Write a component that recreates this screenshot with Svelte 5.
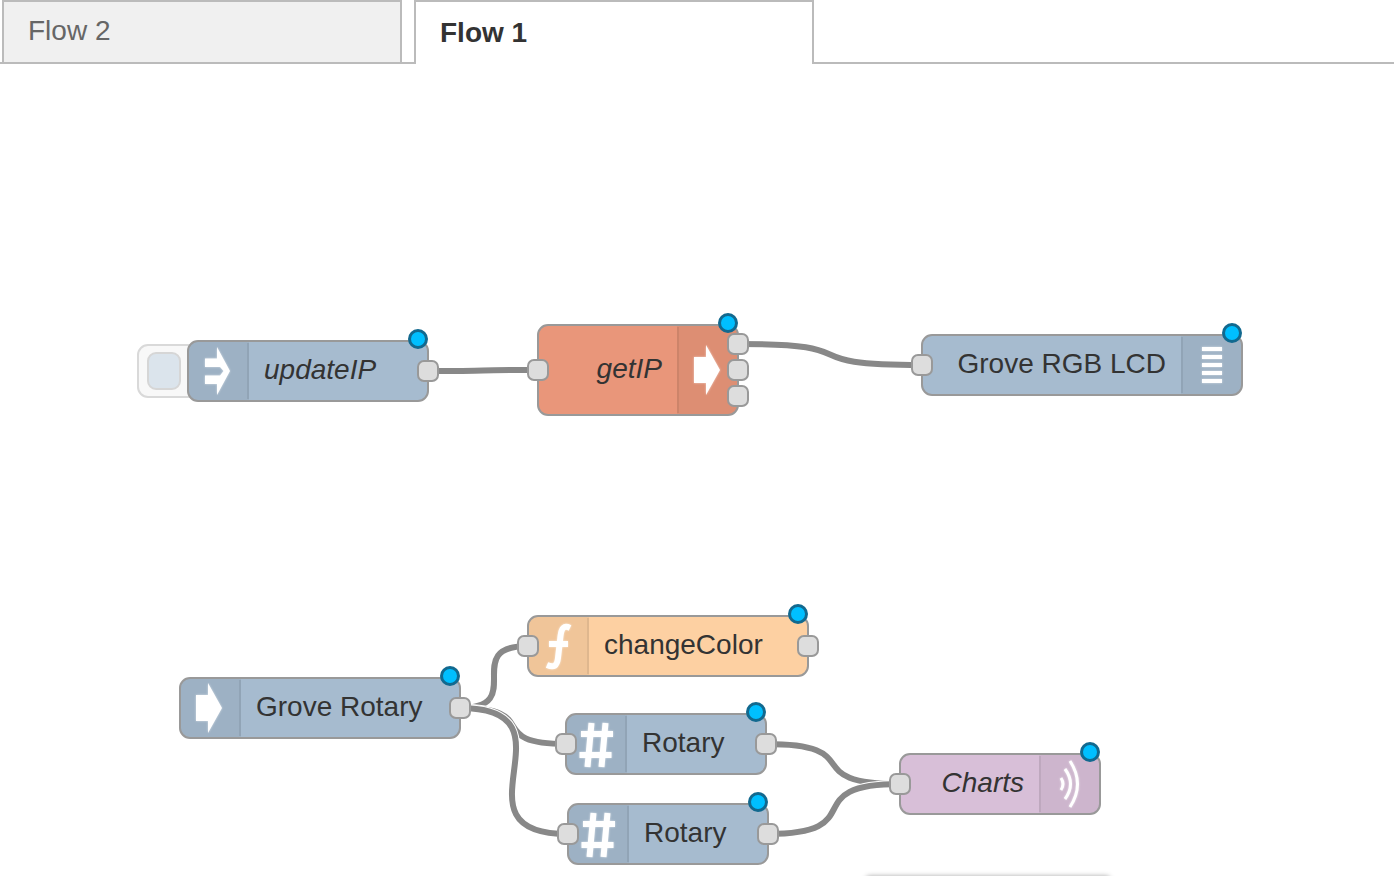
<script>
  const tabs = [
    { label: 'Flow 2', active: false },
    { label: 'Flow 1', active: true }
  ];

  // Node boxes, in canvas coordinates.
  const nodes = [
    { id: 'update', label: 'updateIP', x: 187, y: 276, w: 242, h: 62, color: 'blue', icon: 'inject', italic: true, outs: 1, trigger: true },
    { id: 'getip', label: 'getIP', x: 537, y: 260, w: 202, h: 92, color: 'salmon', icon: 'arrow', italic: true, right: true, input: true, outs: 3 },
    { id: 'lcd', label: 'Grove RGB LCD', x: 921, y: 270, w: 322, h: 62, color: 'blue', icon: 'lines', right: true, input: true, outs: 0 },
    { id: 'grove', label: 'Grove Rotary', x: 179, y: 613, w: 282, h: 62, color: 'blue', icon: 'arrow', outs: 1 },
    { id: 'change', label: 'changeColor', x: 527, y: 551, w: 282, h: 62, color: 'orange', icon: 'func', input: true, outs: 1 },
    { id: 'rotary1', label: 'Rotary', x: 565, y: 649, w: 202, h: 62, color: 'blue', icon: 'hash', input: true, outs: 1 },
    { id: 'rotary2', label: 'Rotary', x: 567, y: 739, w: 202, h: 62, color: 'blue', icon: 'hash', input: true, outs: 1 },
    { id: 'charts', label: 'Charts', x: 899, y: 689, w: 202, h: 62, color: 'plum', icon: 'waves', italic: true, right: true, input: true, outs: 0 }
  ];

  const links = [
    ['update', 0, 'getip'],
    ['getip', 0, 'lcd'],
    ['grove', 0, 'change'],
    ['grove', 0, 'rotary1'],
    ['grove', 0, 'rotary2'],
    ['rotary1', 0, 'charts'],
    ['rotary2', 0, 'charts']
  ];

  const PORT_STEP = 26;
  const REACH = 200;
  const byId = Object.fromEntries(nodes.map((n) => [n.id, n]));

  function wire([from, port, to]) {
    const a = byId[from];
    const b = byId[to];
    const x1 = a.x + a.w - 1;
    const y1 = a.y + a.h / 2 + (port - (a.outs - 1) / 2) * PORT_STEP;
    const x2 = b.x + 1;
    const y2 = b.y + b.h / 2;
    const pull = 0.75 * Math.min(REACH, Math.hypot(x2 - x1, y2 - y1));
    return `M${x1} ${y1}C${x1 + pull} ${y1} ${x2 - pull} ${y2} ${x2} ${y2}`;
  }
</script>

<nav class="tabs" aria-label="Flows">
  {#each tabs as tab}
    <a class="tab" class:active={tab.active} href="#flow" aria-current={tab.active ? 'page' : undefined}>{tab.label}</a>
  {/each}
</nav>

<main class="canvas">
  <svg class="wires" aria-hidden="true">
    {#each links as link}
      <path class="outline" d={wire(link)} />
      <path class="line" d={wire(link)} />
    {/each}
  </svg>

  {#each nodes as node (node.id)}
    <div class="slot" style="left:{node.x}px;top:{node.y}px;width:{node.w}px;height:{node.h}px">
      {#if node.trigger}
        <button class="trigger" aria-label="Inject {node.label}"><span></span></button>
      {/if}
      <div class="node {node.color}" class:right={node.right}>
        <div class="pane">
          <svg width="58" height="58" viewBox="0 0 58 58" aria-hidden="true">
            {#if node.icon === 'inject'}
              <path class="solid" d="M16 16.500H28V5L41 29L28 53V42H16V33.500H31L34.500 29L31 25H16Z" />
            {:else if node.icon === 'arrow'}
              <path class="solid" d="M15 16H27V4L41 29L27 54V42H15Z" />
            {:else if node.icon === 'lines'}
              <path class="stroke four" d="M19 13H39M19 21H39M19 29H39M19 37H39M19 45H39" />
            {:else if node.icon === 'func'}
              <path class="stroke six" d="M41 11C35 8 32.500 11 31.500 19L29 41C28 49 25 51 18 48M20 27H39" />
            {:else if node.icon === 'hash'}
              <path class="stroke six" d="M24.500 8L20.500 52M38.500 8L34.500 52M14 19H46M12.500 40H44.500" />
            {:else}
              <path class="stroke three" d="M20 23Q24 29 20 35M24 14Q35 29 24 44M29 6Q44 29 29 52" />
            {/if}
          </svg>
        </div>
        <span class="label" class:italic={node.italic}>{node.label}</span>
      </div>
      {#if node.input}
        <div class="ports in"><i></i></div>
      {/if}
      <div class="ports out">
        {#each { length: node.outs } as _}<i></i>{/each}
      </div>
      <span class="changed"></span>
    </div>
  {/each}

  <div class="drawer"></div>
</main>

<style>
  :global(body) {
    margin: 0;
    background: #fff;
  }

  :global(#app) {
    display: flex;
    flex-direction: column;
    min-height: 100vh;
    font-family: 'Liberation Sans', Arial, sans-serif;
    font-size: 28px;
    color: #333;
  }

  .tabs {
    display: flex;
    gap: 12px;
    height: 64px;
    padding-left: 2px;
    box-sizing: border-box;
    box-shadow: inset 0 -2px #bbb;
  }

  .tab {
    box-sizing: border-box;
    flex: 0 1 400px;
    height: 62px;
    padding: 0 24px;
    border: 2px solid #bbb;
    border-bottom: 0;
    background: #f0f0f0;
    color: #666;
    line-height: 58px;
    text-decoration: none;
    white-space: nowrap;
  }

  .tab.active {
    height: 64px;
    background: #fff;
    color: #333;
    font-weight: bold;
    line-height: 62px;
  }

  .canvas {
    position: relative;
    flex: 1;
    min-height: 812px;
    overflow: hidden;
  }

  .wires {
    position: absolute;
    inset: 0;
    width: 100%;
    height: 100%;
    fill: none;
  }

  .outline {
    stroke: #fff;
    stroke-width: 8px;
  }

  .line {
    stroke: #888;
    stroke-width: 6px;
  }

  .slot {
    position: absolute;
  }

  .node {
    position: relative;
    display: flex;
    box-sizing: border-box;
    height: 100%;
    border: 2px solid #999;
    border-radius: 11px;
    overflow: hidden;
  }

  .node.right {
    flex-direction: row-reverse;
  }

  .blue { background: #a6bbcf; }
  .salmon { background: #e9967a; }
  .orange { background: #fdd0a2; }
  .plum { background: #d8bfd8; }

  .pane {
    position: relative;
    display: flex;
    align-items: center;
    box-sizing: border-box;
    width: 60px;
    padding-right: 2px;
    background: rgba(0, 0, 0, 0.05);
  }

  .right .pane {
    padding: 0 0 0 2px;
  }

  .pane::after {
    content: '';
    position: absolute;
    top: 1px;
    bottom: 1px;
    right: 0;
    width: 2px;
    background: rgba(0, 0, 0, 0.07);
  }

  .right .pane::after {
    right: auto;
    left: 0;
  }

  .solid {
    fill: #fff;
    filter: drop-shadow(0 0 1px rgba(255, 255, 255, 0.6));
  }

  .stroke {
    fill: none;
    stroke: #fff;
    filter: drop-shadow(0 0 1px rgba(255, 255, 255, 0.6));
  }

  .three { stroke-width: 3px; }
  .four { stroke-width: 4px; }
  .six { stroke-width: 6px; }

  .label {
    align-self: center;
    padding: 0 15px 2px;
    line-height: 32px;
    white-space: nowrap;
  }

  .italic {
    font-style: italic;
  }

  .ports {
    position: absolute;
    top: 0;
    bottom: 0;
    display: flex;
    flex-direction: column;
    justify-content: center;
    gap: 4px;
  }

  .in { left: -10px; }
  .out { right: -10px; }

  .ports i {
    box-sizing: border-box;
    width: 22px;
    height: 22px;
    border: 2px solid #999;
    border-radius: 7px;
    background: #ddd;
  }

  .changed {
    position: absolute;
    top: -11px;
    right: 1px;
    box-sizing: border-box;
    width: 20px;
    height: 20px;
    border: 3px solid #12698f;
    border-radius: 50%;
    background: #00bfff;
  }

  .trigger {
    position: absolute;
    top: 4px;
    left: -50px;
    box-sizing: border-box;
    width: 66px;
    height: 54px;
    padding: 6px 8px;
    border: 2px solid #d9d9d9;
    border-radius: 11px;
    background: #f8f8f8;
  }

  .trigger span {
    display: block;
    box-sizing: border-box;
    width: 34px;
    height: 38px;
    border: 2px solid #d6d6d6;
    border-radius: 9px;
    background: #dbe4ec;
  }

  .drawer {
    position: absolute;
    bottom: -11px;
    left: 866px;
    width: 244px;
    height: 11px;
    border-radius: 4px;
    box-shadow: 0 0 5px rgba(0, 0, 0, 0.35);
  }
</style>
